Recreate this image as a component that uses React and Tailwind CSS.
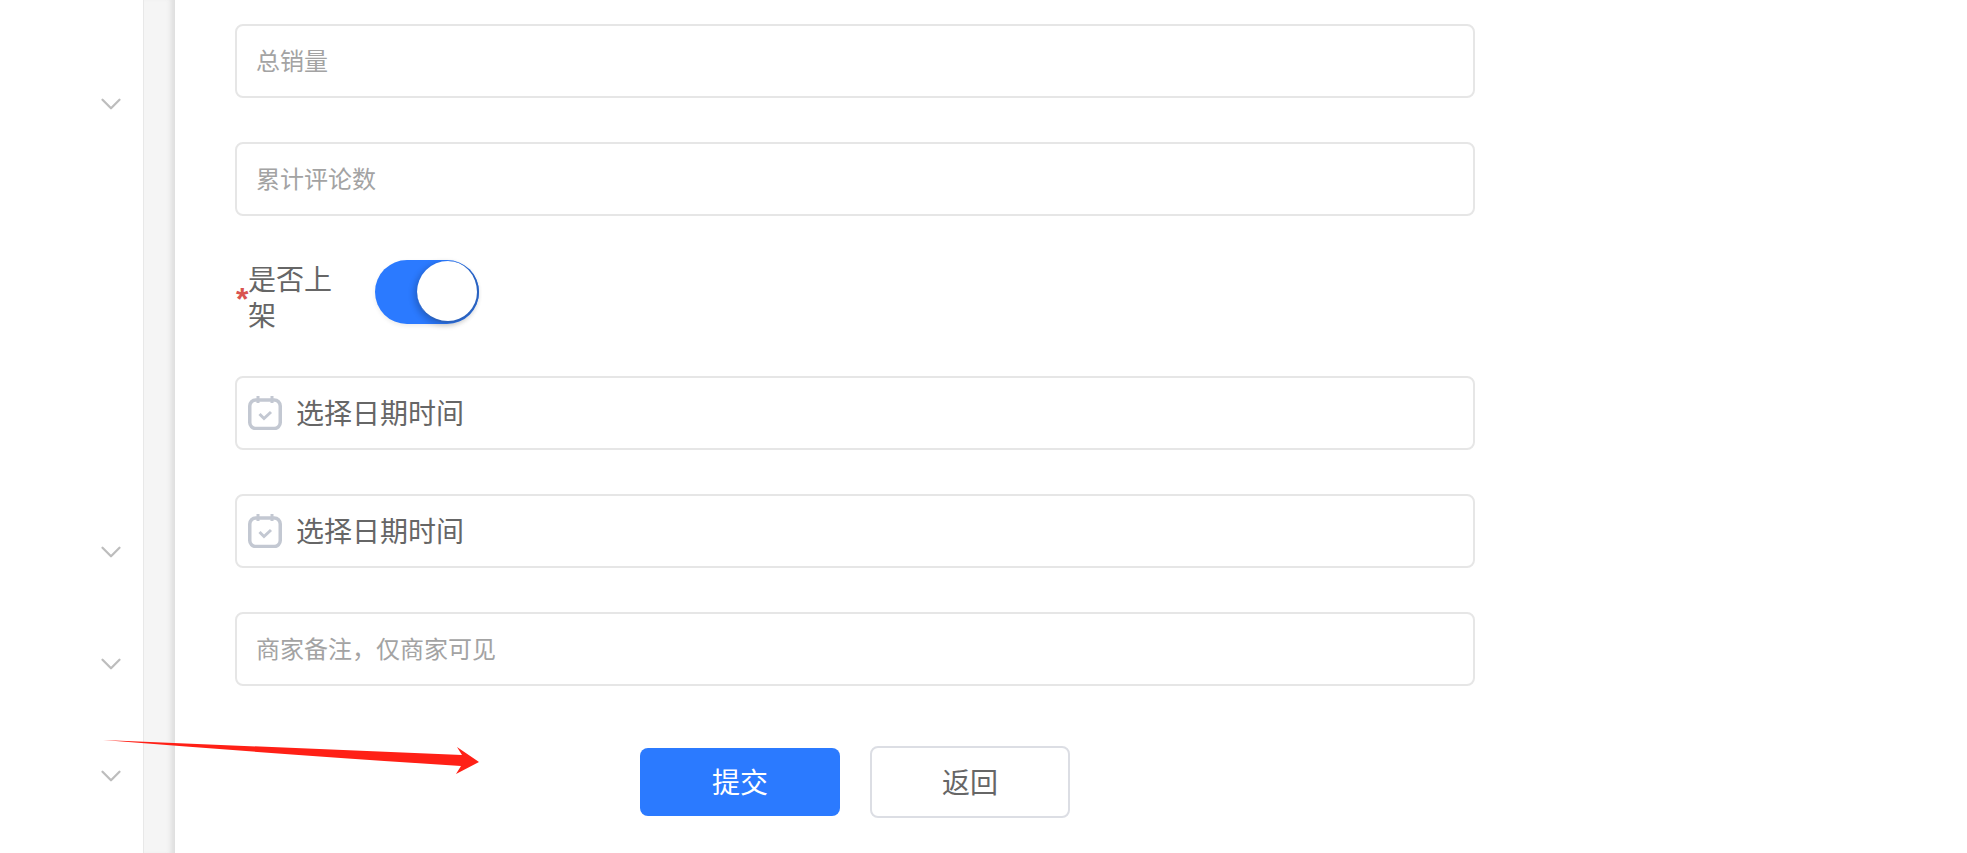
import { ChevronDown } from "lucide-react";

const FONT = "font-['Liberation_Sans','Noto_Sans_CJK_SC',sans-serif]";

const TextField = ({ placeholder }) => (
  <div className="h-[74px] w-[1240px] flex items-center pl-[19px] pt-[2px] bg-white border-2 border-[#e6e6e6] rounded-[8px] text-[24px] text-[#a3a3a3]">
    {placeholder}
  </div>
);

const CalendarIcon = () => (
  <svg width="34" height="34" viewBox="0 0 34 34" fill="none" className="shrink-0">
    <rect x="1.75" y="4" width="30.5" height="28.5" rx="6" stroke="#c3c8d2" strokeWidth="3.5" />
    <path d="M10 0V7M24 0V7" stroke="#c3c8d2" strokeWidth="3" />
    <path d="M11.5 18l4.5 4.5 7-6.5" stroke="#c3c8d2" strokeWidth="3" fill="none" />
  </svg>
);

const DateField = () => (
  <div className="h-[74px] w-[1240px] flex items-center pl-[11px] gap-[14px] bg-white border-2 border-[#e6e6e6] rounded-[8px] text-[28px] text-[#666666]">
    <CalendarIcon />
    <span className="mt-[3px]">选择日期时间</span>
  </div>
);

const Chevron = ({ className }) => (
  <ChevronDown size={34} strokeWidth={1.6} className={`text-[#bdbdbd] ${className}`} />
);

export default function App() {
  return (
    <div className={`relative h-[853px] w-full flex overflow-hidden bg-white ${FONT}`}>
      <div className="w-[143px] shrink-0 flex flex-col items-end pr-[15px] pt-[87px]">
        <Chevron />
        <Chevron className="mt-[414px]" />
        <Chevron className="mt-[78px]" />
        <Chevron className="mt-[78px]" />
      </div>
      <div className="w-[32px] shrink-0 bg-[#f5f5f5] border-l border-[#e8e8e8] shadow-[inset_-7px_0_5px_-3px_#dedede]" />

      <div className="flex-1 pl-[60px] pt-[24px] flex flex-col">
        <TextField placeholder="总销量" />
        <div className="mt-[44px]">
          <TextField placeholder="累计评论数" />
        </div>
        <div className="mt-[44px] h-[64px] flex items-center">
          <span className="text-[#d9534f] text-[32px] font-bold leading-none mt-[13px] w-[13px] pl-[1px]">*</span>
          <div className="w-[90px] mt-[13px] text-[28px] leading-[36px] text-[#666666]">是否上架</div>
          <div className="ml-[37px] w-[104px] h-[64px] rounded-full bg-[#2b7aff] flex justify-end items-center shadow-[0_2px_4px_rgba(0,0,0,0.08)]">
            <div className="w-[62px] h-[62px] rounded-full bg-white border-r-2 border-b-2 border-[#2a62bf] shadow-[-3px_2px_6px_rgba(0,0,0,0.2)]" />
          </div>
        </div>
        <div className="mt-[52px]">
          <DateField />
        </div>
        <div className="mt-[44px]">
          <DateField />
        </div>
        <div className="mt-[44px]">
          <TextField placeholder="商家备注，仅商家可见" />
        </div>
        <div className="mt-[60px] pl-[405px] flex items-center gap-[30px]">
          <button className="w-[200px] h-[68px] pt-[4px] rounded-[8px] bg-[#2b7aff] text-white text-[28px]">提交</button>
          <button className="w-[200px] h-[72px] pt-[4px] rounded-[8px] bg-white border-2 border-[#dcdee4] text-[#666666] text-[28px]">返回</button>
        </div>
      </div>

      <svg width="400" height="40" viewBox="0 0 400 40" className="absolute left-[100px] top-[738px]">
        <path d="M3 2L362 17L357 9L379 24L356 36L361 28Q190 17 3 2Z" fill="#ff2016" />
      </svg>
    </div>
  );
}
